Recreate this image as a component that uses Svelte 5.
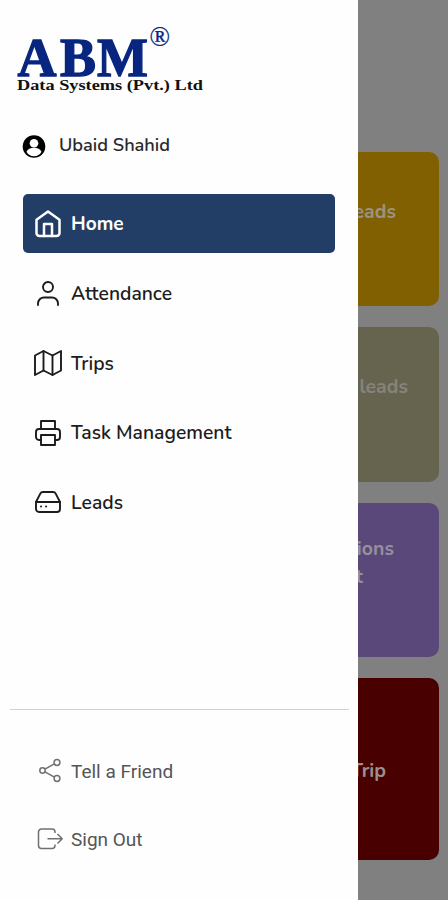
<script>
	let active = $state('Home');

	const menu = ['Home', 'Attendance', 'Trips', 'Task Management', 'Leads'];

	const cards = [
		{ color: 'gold', lines: ['Leads'] },
		{ color: 'olive', lines: ['leads'] },
		{ color: 'purple', lines: ['ions', 't'] },
		{ color: 'maroon', lines: ['Trip'] }
	];
</script>

<div class="screen">
	<aside class="drawer">
		<svg class="logo" width="200" height="76" viewBox="0 0 200 76">
			<text class="brand" x="0.5 43 80" y="50.500">ABM</text>
			<text class="mark" x="132.500" y="21">®</text>
			<text class="company" x="0" y="65" textLength="186" lengthAdjust="spacingAndGlyphs">Data Systems (Pvt.) Ltd</text>
		</svg>

		<div class="user">
			<svg width="24" height="24" viewBox="0 0 24 24">
				<circle cx="12" cy="12.500" r="11.300" fill="#000" />
				<circle cx="12" cy="9.300" r="4.300" fill="#fff" />
				<path d="M4.500 17.700c1-2.700 4-4 7.500-4s6.500 1.300 7.500 4c-1.500 2.900-4 4.500-7.500 4.500s-6-1.600-7.500-4.500z" fill="#fff" />
			</svg>
			<span>Ubaid Shahid</span>
		</div>

		<nav>
			{#each menu as item}
				<button class="item" class:active={active === item} onclick={() => (active = item)}>
					<svg class="icon" width="28" height="28" viewBox="0 0 28 28">
						{#if item === 'Home'}
							<path d="M2.500 9.700 14 1.500l11.500 8.200V23a3 3 0 0 1-3 3h-17a3 3 0 0 1-3-3z" />
							<path d="M10 26V14h8v12" />
						{:else if item === 'Attendance'}
							<circle cx="14" cy="7" r="5" />
							<path d="M4 25v-1.500a6 6 0 0 1 6-6h8a6 6 0 0 1 6 6V25" />
						{:else if item === 'Trips'}
							<path d="M1 6.500 9.500 2 18.500 6.500 27 2v19.500L18.500 26 9.500 21.500 1 26z" />
							<path d="M9.500 2v19.500M18.500 6.500V26" />
						{:else if item === 'Task Management'}
							<path d="M7 10V2h14v8" />
							<path d="M7 21H5a3 3 0 0 1-3-3v-5a3 3 0 0 1 3-3h18a3 3 0 0 1 3 3v5a3 3 0 0 1-3 3h-2" />
							<path d="M7 16h14v10H7z" />
						{:else}
							<path d="M2 14 6.300 5.600A3 3 0 0 1 9 4h10a3 3 0 0 1 2.700 1.600L26 14v7a3 3 0 0 1-3 3H5a3 3 0 0 1-3-3z" />
							<path d="M2 14h24M7 18.500h.1M12 18.500h.1" />
						{/if}
					</svg>
					<span>{item}</span>
				</button>
			{/each}
		</nav>

		<div class="footer">
			<button class="link">
				<svg width="28" height="26" viewBox="0 0 28 26">
					<circle cx="5.500" cy="12.500" r="2.700" />
					<circle cx="20" cy="4.500" r="2.900" />
					<circle cx="20" cy="20.500" r="2.900" />
					<path d="m7.900 11.200 9.500-5.300M7.900 13.800l9.500 5.300" />
				</svg>
				<span>Tell a Friend</span>
			</button>
			<button class="link">
				<svg width="28" height="26" viewBox="0 0 28 26">
					<path d="M18 7V6a3 3 0 0 0-3-3H4.500a3 3 0 0 0-3 3v13.500a3 3 0 0 0 3 3H15a3 3 0 0 0 3-3v-1" />
					<path d="M10.500 12.800H25M20.500 8l4.700 4.800-4.700 4.800" />
				</svg>
				<span>Sign Out</span>
			</button>
		</div>
	</aside>

	<main>
		{#each cards as card}
			<div class="card {card.color}">
				{#each card.lines as line}
					<span>{line}</span>
				{/each}
			</div>
		{/each}
	</main>
</div>

<style>
	:global(body) {
		margin: 0;
	}

	.screen {
		display: flex;
		width: 448px;
		height: 900px;
		overflow: hidden;
		background: #808080;
		font-family: Nunito, 'Open Sans', sans-serif;
	}

	.drawer {
		display: flex;
		flex-direction: column;
		box-sizing: border-box;
		flex: 0 0 358px;
		background: #fefefe;
	}

	.logo {
		display: block;
		margin: 25px 0 0 17px;
		overflow: visible;
		font-family: 'Liberation Serif', serif;
		font-weight: 700;
	}

	.brand {
		font-size: 54px;
		fill: #08267f;
		stroke: #08267f;
		stroke-width: 1.3px;
	}

	.mark {
		font-size: 27px;
		font-weight: 400;
		fill: #08267f;
		stroke: #08267f;
		stroke-width: 0.3px;
	}

	.company {
		font-size: 15.5px;
		fill: #111;
	}

	.user {
		display: flex;
		align-items: center;
		gap: 13px;
		height: 30px;
		margin: 30px 0 0 22px;
		font-size: 18.2px;
		font-weight: 600;
		color: #2a2a2a;
	}

	.user span {
		margin-top: -2px;
	}

	nav {
		display: flex;
		flex-direction: column;
		gap: 11px;
		margin: 33px 23px 0;
	}

	button {
		display: flex;
		align-items: center;
		border: 0;
		background: none;
		font-family: inherit;
		text-align: left;
	}

	.item {
		gap: 9px;
		height: 58.500px;
		padding: 2px 0 0 11px;
		border-radius: 5px;
		font-size: 19.3px;
		font-weight: 600;
		color: #1c1c1c;
	}

	.item.active {
		background: #223e66;
		color: #fff;
		font-size: 19px;
		font-weight: 700;
	}

	.icon {
		fill: none;
		stroke: currentColor;
		stroke-width: 1.9;
		stroke-linecap: round;
		stroke-linejoin: round;
	}

	.active .icon {
		stroke-width: 2.5;
	}

	.footer {
		display: flex;
		flex-direction: column;
		gap: 20px;
		margin: 178px 9px 0 10px;
		padding-top: 37px;
		border-top: 1.5px solid #d2d2d2;
	}

	.link {
		gap: 6px;
		height: 48px;
		padding: 1px 0 0 27px;
		font-family: Roboto, sans-serif;
		font-size: 19px;
		font-weight: 400;
		color: #555;
	}

	.link svg {
		fill: none;
		stroke: #707070;
		stroke-width: 1.5;
		stroke-linejoin: round;
	}

	main {
		display: flex;
		flex-direction: column;
		gap: 21px;
		flex: 1;
		min-width: 0;
		padding: 152px 9px 0 0;
	}

	.card {
		display: flex;
		flex-direction: column;
		align-items: flex-end;
		box-sizing: border-box;
		height: 154.400px;
		overflow: hidden;
		border-radius: 0 10px 10px 0;
		font-size: 19.5px;
		font-weight: 700;
		line-height: 28px;
		color: #9b9484;
	}

	.gold {
		padding: 46px 43px 0 0;
		background: #806000;
	}

	.olive {
		padding: 46px 31px 0 0;
		background: #66634f;
		color: #85847a;
	}

	.purple {
		padding: 32px 45px 0 0;
		background: #594879;
		color: #96909c;
	}

	.purple span:last-child {
		margin-right: 31px;
	}

	.maroon {
		height: 182px;
		padding: 79px 53px 0 0;
		background: #480000;
		color: #9b8f8f;
	}
</style>
